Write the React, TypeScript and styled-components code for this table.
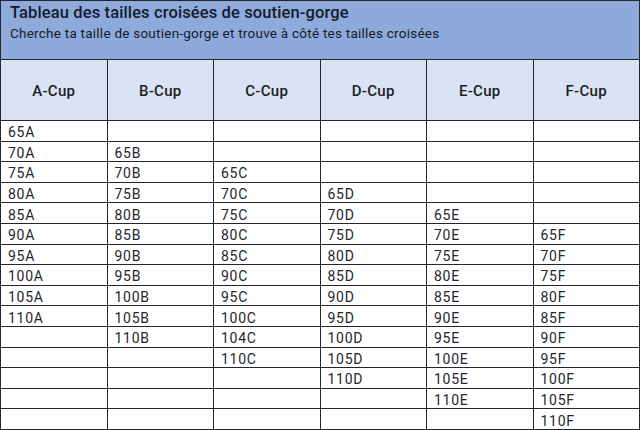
import React from "react";
import styled, { createGlobalStyle } from "styled-components";

const Global = createGlobalStyle`
  html, body { margin: 0; padding: 0; background: #ffffff; }
  body { font-family: "Roboto", "Liberation Sans", sans-serif; }
`;

const Page = styled.div`
  width: 640px;
  height: 430px;
  box-sizing: border-box;
  display: flex;
  flex-direction: column;
  border-left: 1px solid #23262d;
  border-top: 1px solid #23262d;
  background: #ffffff;
`;

const TitleBand = styled.header`
  height: 59px;
  box-sizing: border-box;
  background: #8eaadb;
  border-right: 1px solid #23262d;
  border-bottom: 1px solid #23262d;
  padding: 2px 0 0 9px;
  display: flex;
  flex-direction: column;
  color: #141b2b;
`;

const Title = styled.h1`
  margin: 0;
  font-size: 16.5px;
  line-height: 20px;
  font-weight: 500;
  letter-spacing: 0.12px;
`;

const Subtitle = styled.p`
  margin: 1px 0 0;
  font-size: 13.5px;
  line-height: 18px;
  font-weight: 400;
  letter-spacing: 0.24px;
`;

const Grid = styled.div`
  flex: 1;
  display: grid;
  grid-template-columns: repeat(6, 1fr);
  grid-template-rows: 61px repeat(15, 1fr);
`;

const HeadCell = styled.div`
  box-sizing: border-box;
  background: #dae3f3;
  border-right: 1px solid #23262d;
  border-bottom: 1px solid #23262d;
  display: flex;
  align-items: center;
  justify-content: center;
  padding-top: 2px;
  font-size: 15px;
  font-weight: 500;
  color: #1b1d22;
  letter-spacing: 0.3px;
`;

const Cell = styled.div`
  box-sizing: border-box;
  border-right: 1px solid #23262d;
  border-bottom: 1px solid #23262d;
  display: flex;
  align-items: center;
  padding: 3px 0 0 7px;
  font-size: 14px;
  letter-spacing: 0.7px;
  color: #24262b;
  white-space: nowrap;
`;

const cups = ["A", "B", "C", "D", "E", "F"];

const columns: string[][] = [
  ["65A", "70A", "75A", "80A", "85A", "90A", "95A", "100A", "105A", "110A"],
  ["65B", "70B", "75B", "80B", "85B", "90B", "95B", "100B", "105B", "110B"],
  ["65C", "70C", "75C", "80C", "85C", "90C", "95C", "100C", "104C", "110C"],
  ["65D", "70D", "75D", "80D", "85D", "90D", "95D", "100D", "105D", "110D"],
  ["65E", "70E", "75E", "80E", "85E", "90E", "95E", "100E", "105E", "110E"],
  ["65F", "70F", "75F", "80F", "85F", "90F", "95F", "100F", "105F", "110F"],
];

const ROWS = 15;

export default function App() {
  const rows: string[][] = [];
  for (let r = 0; r < ROWS; r++) {
    const row: string[] = [];
    for (let c = 0; c < 6; c++) {
      const idx = r - c;
      row.push(idx >= 0 && idx < columns[c].length ? columns[c][idx] : "");
    }
    rows.push(row);
  }
  return (
    <>
      <Global />
      <Page>
        <TitleBand>
          <Title>Tableau des tailles croisées de soutien-gorge</Title>
          <Subtitle>
            Cherche ta taille de soutien-gorge et trouve à côté tes tailles croisées
          </Subtitle>
        </TitleBand>
        <Grid>
          {cups.map((c) => (
            <HeadCell key={c}>{c}-Cup</HeadCell>
          ))}
          {rows.map((row, r) =>
            row.map((v, c) => <Cell key={`${r}-${c}`}>{v}</Cell>)
          )}
        </Grid>
      </Page>
    </>
  );
}
